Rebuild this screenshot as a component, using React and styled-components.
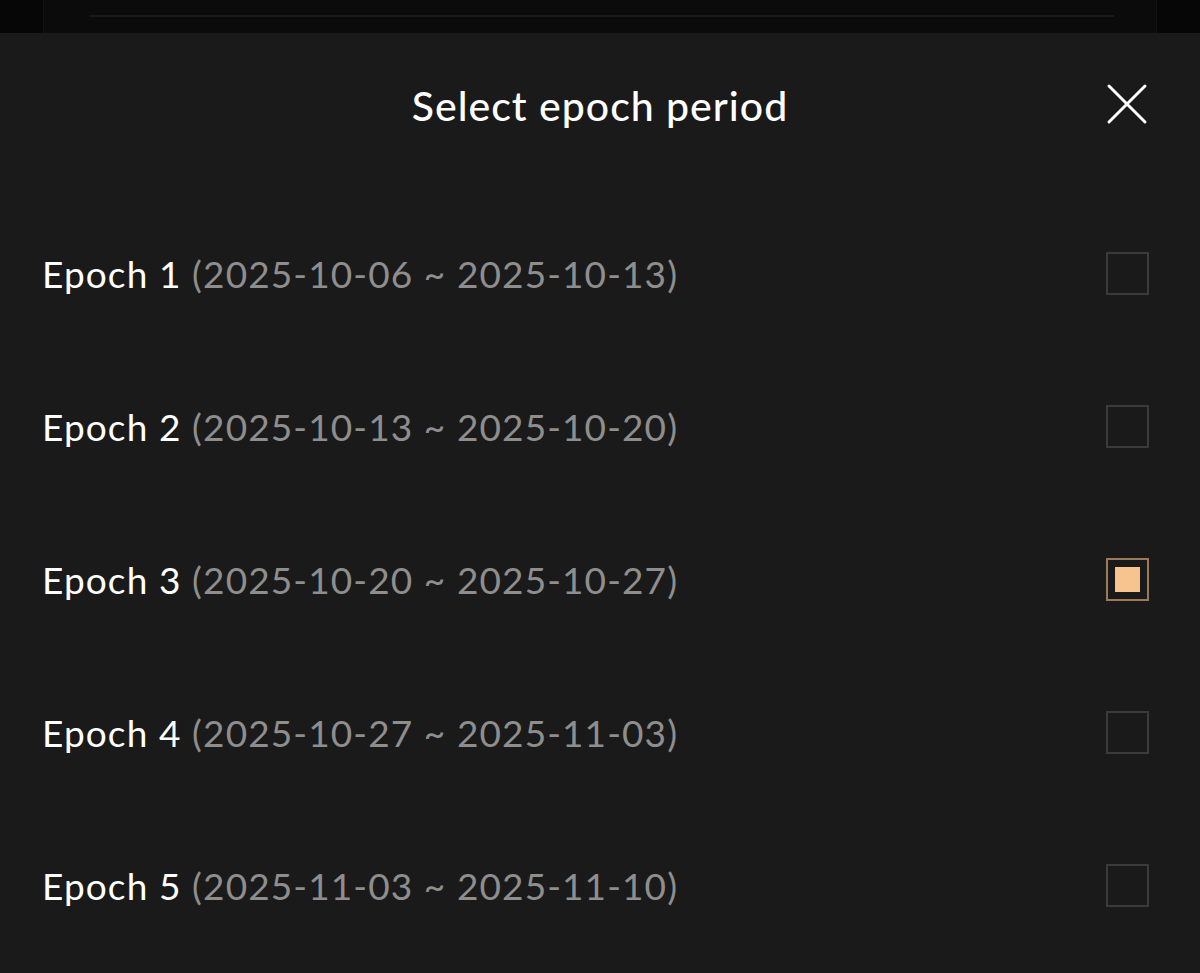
import React, { useState } from 'react';
import styled, { createGlobalStyle } from 'styled-components';

const GlobalStyle = createGlobalStyle`
  html, body {
    margin: 0;
    padding: 0;
    background: #060606;
  }
  body {
    font-family: "Lato", "Noto Sans", sans-serif;
  }
`;

const Page = styled.div`
  width: 1200px;
  height: 973px;
  display: flex;
  flex-direction: column;
  overflow: hidden;
  background: #060606;
`;

const Backdrop = styled.div`
  height: 33px;
  flex-shrink: 0;
  margin: 0 43px;
  background: #0b0b0b;
  border-left: 1px solid #111;
  border-right: 1px solid #111;
  display: flex;
  flex-direction: column;
  padding: 15px 42px 0 45px;
  box-sizing: border-box;
`;

const BackdropLine = styled.div`
  height: 2px;
  background: #1a1a1a;
`;

const Sheet = styled.div`
  flex: 1;
  background: #1a1a1a;
  display: flex;
  flex-direction: column;
`;

const Header = styled.div`
  height: 144px;
  display: flex;
  align-items: center;
  justify-content: center;
  position: relative;
`;

const Title = styled.h2`
  margin: 0;
  color: #ffffff;
  font-size: 41px;
  font-weight: 500;
  letter-spacing: 1px;
`;

const CloseButton = styled.button`
  position: absolute;
  right: 52px;
  top: 50px;
  width: 42px;
  height: 42px;
  padding: 0;
  border: none;
  background: transparent;
  cursor: pointer;
  display: flex;
  align-items: center;
  justify-content: center;
`;

const List = styled.div`
  display: flex;
  flex-direction: column;
  padding-top: 20px;
`;

const Row = styled.label`
  height: 153px;
  display: flex;
  align-items: center;
  justify-content: space-between;
  padding: 0 51px 0 42px;
  cursor: pointer;
`;

const Label = styled.span`
  font-size: 37px;
  color: #ffffff;
  letter-spacing: 1.1px;
  white-space: nowrap;
`;

const Range = styled.span`
  color: #8e8e8e;
`;

const Box = styled.span`
  width: 43px;
  height: 43px;
  box-sizing: border-box;
  border: 2px solid ${p => (p.$checked ? '#9c7a58' : '#3b3b3b')};
  padding: 7px;
  display: flex;
`;

const Fill = styled.span`
  flex: 1;
  background: #f7c48f;
`;

const epochs = [
  { n: 1, from: '2025-10-06', to: '2025-10-13' },
  { n: 2, from: '2025-10-13', to: '2025-10-20' },
  { n: 3, from: '2025-10-20', to: '2025-10-27' },
  { n: 4, from: '2025-10-27', to: '2025-11-03' },
  { n: 5, from: '2025-11-03', to: '2025-11-10' },
];

export default function App() {
  const [selected, setSelected] = useState(3);
  return (
    <Page>
      <GlobalStyle />
      <Backdrop>
        <BackdropLine />
      </Backdrop>
      <Sheet>
        <Header>
          <Title>Select epoch period</Title>
          <CloseButton aria-label="Close">
            <svg width="42" height="42" viewBox="0 0 42 42" fill="none">
              <path d="M3 3L39 39M39 3L3 39" stroke="#fff" strokeWidth="3" strokeLinecap="round" />
            </svg>
          </CloseButton>
        </Header>
        <List>
          {epochs.map(e => (
            <Row key={e.n} onClick={() => setSelected(e.n)}>
              <Label>
                Epoch {e.n} <Range>({e.from} ~ {e.to})</Range>
              </Label>
              <Box $checked={selected === e.n}>{selected === e.n && <Fill />}</Box>
            </Row>
          ))}
        </List>
      </Sheet>
    </Page>
  );
}
